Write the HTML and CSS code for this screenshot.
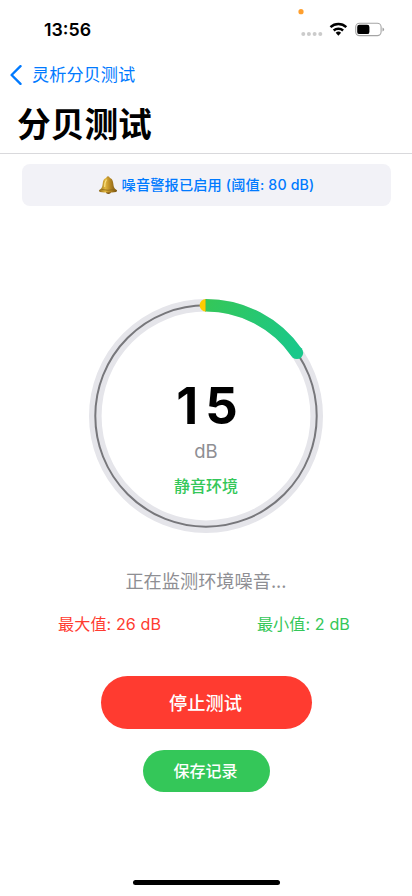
FILE: index.html
```html
<!DOCTYPE html>
<html lang="zh-CN">
<head>
<meta charset="utf-8">
<meta name="viewport" content="width=device-width, initial-scale=1">
<title>分贝测试</title>
<link rel="stylesheet" href="styles.css">
</head>
<body>
<div class="screen">
  <div class="status">
    <span class="time">13:56</span>
    <svg class="status-icons" width="92" height="32" viewBox="0 0 92 32">
      <circle cx="5" cy="3.7" r="2.6" fill="#ff9f2e"/>
      <g fill="#cbcbcb"><circle cx="7.3" cy="26.1" r="2"/><circle cx="12.9" cy="26.1" r="2"/><circle cx="18.6" cy="26.1" r="2"/><circle cx="24.3" cy="26.1" r="2"/></g>
      <g fill="none" stroke="#000" stroke-width="2.5">
        <path d="M34.5 19.1A11.8 11.8 0 0 1 50.3 19.1"/>
        <path d="M37.7 22.5A7 7 0 0 1 47.1 22.5"/>
      </g>
      <path d="M39.7 24.7A4 4 0 0 1 45.1 24.7L42.4 27.7Z"/>
      <rect x="59.7" y="15.2" width="25.4" height="12.4" rx="3.8" fill="none" stroke="#a5a5a5" stroke-width="1.1"/>
      <rect x="61.2" y="16.7" width="12.2" height="9.4" rx="2.2"/>
      <path d="M86.5 19.4Q88.1 19.9 88.1 21.4T86.5 23.4Z" fill="#a0a0a0"/>
    </svg>
  </div>
  <nav class="nav">
    <svg class="back" width="12" height="20" viewBox="0 0 12 20"><path d="M10.5 1.2L1.6 10L10.5 18.8" fill="none" stroke="#007aff" stroke-width="2.4" stroke-linecap="round" stroke-linejoin="round"/></svg>
    <span>灵析分贝测试</span>
  </nav>
  <h1 class="title">分贝测试</h1>
  <div class="alert">
    <svg class="bell" width="20" height="20" viewBox="0 0 20 20">
      <defs>
        <linearGradient id="gold"><stop offset="0" stop-color="#8b6515"/><stop offset=".35" stop-color="#e2b73f"/><stop offset=".6" stop-color="#b98a24"/><stop offset="1" stop-color="#74500d"/></linearGradient>
      </defs>
      <circle cx="10" cy="2.7" r="1.5" fill="#b4892a"/>
      <ellipse cx="10.4" cy="17.2" rx="2.4" ry="1.8" fill="#765010"/>
      <path d="M10 2.5C6.8 2.5 5.2 4.8 4.8 8C4.3 12.7 3.4 13.6 1.3 15.1Q.1 16.3 2 16.9Q10 18.2 18 16.9Q19.9 16.3 18.7 15.1C16.6 13.6 15.7 12.7 15.2 8C14.8 4.8 13.2 2.5 10 2.5Z" fill="url(#gold)"/>
      <path d="M3.3 14.4Q10 16.1 16.7 14.4" fill="none" stroke="#8d681a" stroke-width=".8"/>
      <path d="M8.3 5Q6.8 7 6.7 11.5" fill="none" stroke="#fbe48a" stroke-width="1.1" stroke-linecap="round"/>
    </svg>
    <span>噪音警报已启用 (阈值: 80 dB)</span>
  </div>
  <div class="gauge">
    <svg class="ring" width="236" height="236" viewBox="-118 -118 236 236">
      <defs>
        <linearGradient id="level" gradientUnits="userSpaceOnUse" x1="0" y1="-111" x2="91" y2="-63"><stop offset="0" stop-color="#34c759"/><stop offset="1" stop-color="#19c88b"/></linearGradient>
      </defs>
      <circle r="110.7" fill="none" stroke="#e5e5ea" stroke-width="12.6"/>
      <circle r="110.7" fill="none" stroke="#77777b" stroke-width="2"/>
      <path d="M0 -117A6.3 6.3 0 0 0 0 -104.4Z" fill="#ffcc00"/>
      <path d="M90.9 -63.2h.01" stroke="#19c88b" stroke-width="12.6" stroke-linecap="round"/>
      <path d="M-.4 -110.7H0A110.7 110.7 0 0 1 90.9 -63.2" fill="none" stroke="url(#level)" stroke-width="12.6"/>
      <path d="M-.5 -117V-104.4" stroke="#a9bd24" stroke-width=".8"/>
    </svg>
    <div class="reading">
      <div class="value">15</div>
      <div class="unit">dB</div>
      <div class="level">静音环境</div>
    </div>
  </div>
  <div class="message">正在监测环境噪音...</div>
  <div class="stats">
    <span class="max">最大值: 26 dB</span>
    <span class="min">最小值: 2 dB</span>
  </div>
  <button class="stop">停止测试</button>
  <button class="save">保存记录</button>
  <div class="home"></div>
</div>
</body>
</html>
```
FILE: styles.css
```css
* { box-sizing: border-box; }
body {
  margin: 0;
  background: #fff;
  font-family: Inter, "Noto Sans CJK SC", sans-serif;
  color: #000;
}
.screen {
  width: 412px;
  height: 896px;
  display: flex;
  flex-direction: column;
  align-items: center;
  overflow: hidden;
}
.status {
  width: 100%;
  height: 54px;
  padding: 8px 24px 0 44px;
  display: flex;
  justify-content: space-between;
  align-items: flex-start;
}
.time {
  padding-top: 11px;
  font-size: 17.8px;
  line-height: 22px;
  font-weight: 600;
}
.nav {
  width: 100%;
  height: 42px;
  padding-left: 10px;
  display: flex;
  align-items: center;
  gap: 10px;
  color: #007aff;
  font-size: 17.2px;
  line-height: 26px;
}
.title {
  width: 100%;
  height: 58px;
  margin: 0;
  padding: 5px 0 0 17px;
  border-bottom: 1px solid #d9d9dc;
  font-size: 33.7px;
  line-height: 48px;
  font-weight: 700;
}
.alert {
  width: 369px;
  height: 42px;
  margin-top: 10px;
  border-radius: 8px;
  background: #f2f2f7;
  display: flex;
  align-items: center;
  justify-content: center;
  gap: 4px;
  color: #007aff;
  font-size: 14.2px;
  line-height: 22px;
  font-weight: 500;
  letter-spacing: .15px;
}
.gauge {
  width: 236px;
  height: 236px;
  margin-top: 92px;
  display: grid;
}
.ring, .reading { grid-area: 1 / 1; }
.reading {
  padding-top: 77px;
  display: flex;
  flex-direction: column;
  align-items: center;
}
.value {
  padding-left: 9px;
  font-size: 50.8px;
  line-height: 62px;
  font-weight: 700;
  letter-spacing: 7px;
}
.unit {
  margin-top: 1px;
  font-size: 18.5px;
  line-height: 26px;
  color: #8e8e93;
}
.level {
  margin-top: 9px;
  font-size: 16px;
  line-height: 26px;
  font-weight: 500;
  color: #34c759;
}
.message {
  margin-top: 34px;
  font-size: 18.2px;
  line-height: 26px;
  color: #8e8e93;
}
.stats {
  width: 292px;
  margin-top: 17px;
  display: flex;
  justify-content: space-between;
  font-size: 16.1px;
  line-height: 26px;
  letter-spacing: .1px;
}
.stats span { margin-left: -2px; }
.max { color: #ff3b30; }
.min { margin-right: 2px; color: #34c759; }
.stop, .save {
  border: 0;
  padding: 0 1px 2px 0;
  color: #fff;
  font-family: inherit;
  font-weight: 500;
}
.stop {
  width: 211px;
  height: 53px;
  margin-top: 39px;
  border-radius: 27px;
  background: #ff3b30;
  font-size: 18.2px;
}
.save {
  width: 127px;
  height: 42px;
  margin-top: 21px;
  border-radius: 21px;
  background: #34c759;
  font-size: 16px;
}
.home {
  width: 147px;
  height: 5px;
  margin-top: 88px;
  border-radius: 3px;
  background: #000;
}
```
